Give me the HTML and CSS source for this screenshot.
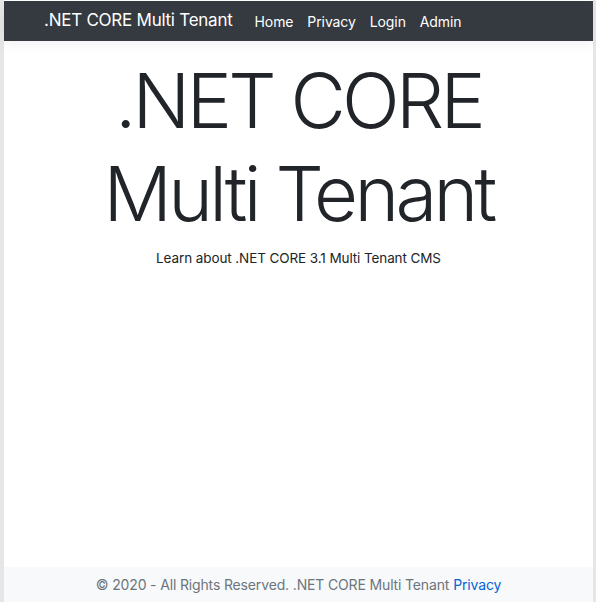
FILE: index.html
```html
<!DOCTYPE html>
<html lang="en">
<head>
<meta charset="utf-8">
<title>.NET CORE Multi Tenant</title>
<link rel="stylesheet" href="styles.css">
</head>
<body>
<div class="page">
  <header class="navbar">
    <a class="brand" href="#">.NET CORE Multi Tenant</a>
    <nav class="nav">
      <a href="#">Home</a>
      <a href="#">Privacy</a>
      <a href="#">Login</a>
      <a href="#">Admin</a>
    </nav>
  </header>
  <main class="main">
    <h1 class="display">.NET CORE Multi Tenant</h1>
    <p class="lead">Learn about .NET CORE 3.1 Multi Tenant CMS</p>
  </main>
  <footer class="footer">
    © 2020 - All Rights Reserved. .NET CORE Multi Tenant <a href="#">Privacy</a>
  </footer>
</div>
</body>
</html>
```
FILE: styles.css
```css
html, body {
  margin: 0;
  padding: 0;
  height: 100%;
}
body {
  background: #e6e6e6;
  font-family: Inter, "Liberation Sans", sans-serif;
  color: #212529;
}
.page {
  box-sizing: border-box;
  margin: 0 3px 0 4px;
  padding-top: 1px;
  min-height: 602px;
  background: #fff;
  display: flex;
  flex-direction: column;
}
.navbar {
  height: 40px;
  background: #343a40;
  display: flex;
  align-items: center;
  padding-left: 40px;
  box-shadow: 0 4px 10px rgba(0,0,0,0.05);
}
.brand {
  color: #fff;
  text-decoration: none;
  font-size: 17px;
  letter-spacing: -0.25px;
  margin-right: 22px;
  position: relative;
  top: -1px;
}
.nav {
  display: flex;
  gap: 14px;
}
.nav a {
  color: #fff;
  text-decoration: none;
  font-size: 14px;
  letter-spacing: -0.1px;
}
.main {
  flex: 1;
  text-align: center;
  padding-top: 13px;
}
.display {
  font-weight: 300;
  font-size: 76px;
  line-height: 93px;
  margin: 0 auto;
  width: 460px;
  letter-spacing: -3.7px;
}
.lead {
  font-size: 13.5px;
  letter-spacing: -0.1px;
  margin: 10px 0 0;
}
.footer {
  height: 35px;
  background: #f8f9fa;
  color: #6c757d;
  font-size: 14px;
  letter-spacing: -0.15px;
  display: flex;
  align-items: center;
  justify-content: center;
  gap: 4px;
}
.footer a {
  color: #0366d6;
  text-decoration: none;
}
```
